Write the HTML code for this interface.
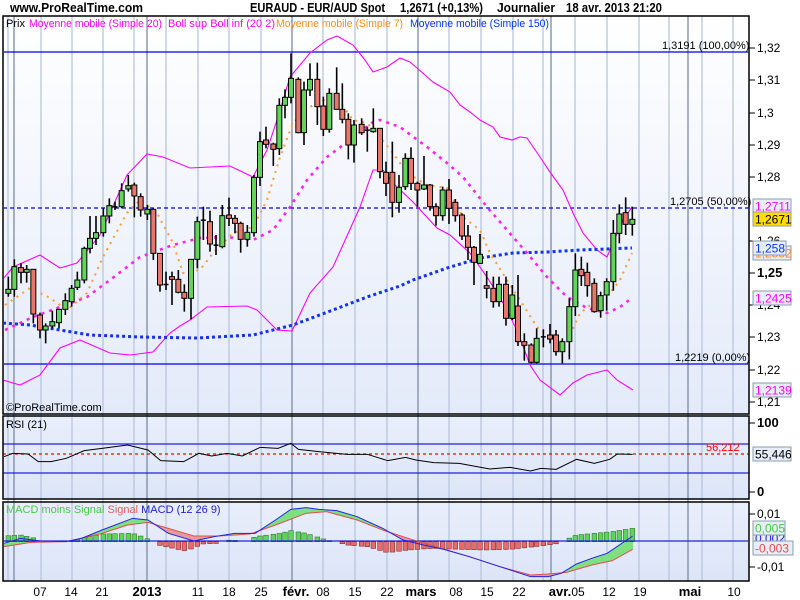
<!DOCTYPE html>
<html><head><meta charset="utf-8"><style>
html,body{margin:0;padding:0;background:#fff;width:800px;height:600px;overflow:hidden}
svg{display:block;font-family:"Liberation Sans",sans-serif}
</style></head><body>
<svg id="s" width="800" height="600" viewBox="0 0 800 600" xmlns="http://www.w3.org/2000/svg">
<defs>
<linearGradient id="gm" x1="0" y1="0" x2="0" y2="1"><stop offset="0" stop-color="#ffffff"/><stop offset="1" stop-color="#e3eaf9"/></linearGradient>
<linearGradient id="gr" x1="0" y1="0" x2="0" y2="1"><stop offset="0" stop-color="#e9eefb"/><stop offset="1" stop-color="#dce5f8"/></linearGradient>
<clipPath id="cm"><rect x="4" y="17" width="744" height="396"/></clipPath>
<clipPath id="cmacd"><rect x="4" y="503" width="744" height="77"/></clipPath>
</defs>
<rect x="3" y="16" width="746" height="398" fill="url(#gm)"/>
<rect x="3" y="416" width="746" height="83" fill="url(#gr)"/>
<rect x="3" y="502" width="746" height="79" fill="url(#gr)"/>
<g id="grid"></g>
<g id="main" clip-path="url(#cm)"></g>
<g id="rsi"></g>
<g id="macd" clip-path="url(#cmacd)"></g>
<rect x="3" y="16" width="746" height="398" fill="none" stroke="#000" stroke-width="1.5"/>
<rect x="3" y="416" width="746" height="83" fill="none" stroke="#000" stroke-width="1.5"/>
<rect x="3" y="502" width="746" height="79" fill="none" stroke="#000" stroke-width="1.5"/>
<g id="ticks"></g>

<text x="10" y="12" font-size="13" font-weight="bold" textLength="133" lengthAdjust="spacingAndGlyphs">www.ProRealTime.com</text>
<text x="250" y="12" font-size="13" font-weight="bold" textLength="135" lengthAdjust="spacingAndGlyphs">EURAUD - EUR/AUD Spot</text>
<text x="400" y="12" font-size="13" font-weight="bold" textLength="83" lengthAdjust="spacingAndGlyphs">1,2671 (+0,13%)</text>
<text x="497" y="12" font-size="13" font-weight="bold" textLength="58" lengthAdjust="spacingAndGlyphs">Journalier</text>
<text x="566" y="12" font-size="13" font-weight="bold" textLength="96" lengthAdjust="spacingAndGlyphs">18 avr. 2013 21:20</text>

<g font-size="11">
<text x="6" y="27" fill="#000">Prix</text>
<text x="29" y="27" fill="#ff00ff" textLength="133" lengthAdjust="spacingAndGlyphs">Moyenne mobile (Simple 20)</text>
<text x="168" y="27" fill="#ff00ff" textLength="107" lengthAdjust="spacingAndGlyphs">Boll sup Boll inf (20 2)</text>
<text x="276" y="27" fill="#ff8c1a" textLength="127" lengthAdjust="spacingAndGlyphs">Moyenne mobile (Simple 7)</text>
<text x="410" y="27" fill="#0033ff" textLength="139" lengthAdjust="spacingAndGlyphs">Moyenne mobile (Simple 150)</text>
<text x="662" y="49" fill="#000">1,3191 (100,00%)</text>
<text x="670" y="205" fill="#000">1,2705 (50,00%)</text>
<text x="675" y="361" fill="#000">1,2219 (0,00%)</text>
<text x="6" y="411" fill="#000">©ProRealTime.com</text>
<text x="6" y="428" fill="#000">RSI (21)</text>
<text x="706" y="451" fill="#ff0000">56,212</text>
<text x="6" y="513"><tspan fill="#44cc44">MACD moins Signal </tspan><tspan fill="#e06060">Signal </tspan><tspan fill="#2222dd">MACD (12 26 9)</tspan></text>
</g>
<g id="axis" font-size="12"></g>
<g id="dates" font-size="12"></g>
</svg>
<script>
var NS="http://www.w3.org/2000/svg";
function el(p,t,a,txt){var e=document.createElementNS(NS,t);for(var k in a)e.setAttribute(k,a[k]);if(txt!=null)e.textContent=txt;document.getElementById(p).appendChild(e);return e;}
var wk=[8,41,72,103,134,166,198,229,261,323,355,387,449,481,513,543,575,607,639,669,702,733];
var mo=[14,147,292,418,551,688];
wk.forEach(function(x){el("grid","line",{x1:x,x2:x,y1:16,y2:581,stroke:"#b9c5de","stroke-width":1.3});});
mo.forEach(function(x){el("grid","line",{x1:x,x2:x,y1:16,y2:581,stroke:"#7c8aa5","stroke-width":1.3});});
el("main","line",{x1:3,x2:749,y1:52,y2:52,stroke:"#0000ee","stroke-width":1.3});
el("main","line",{x1:3,x2:749,y1:364,y2:364,stroke:"#0000ee","stroke-width":1.3});
el("main","line",{x1:3,x2:749,y1:208,y2:208,stroke:"#0000ee","stroke-width":1.3,"stroke-dasharray":"4,3"});
function pl(g,pts,st,w,da){el(g,"polyline",{points:pts.map(function(p){return p[0]+","+p[1]}).join(" "),fill:"none",stroke:st,"stroke-width":w,"stroke-dasharray":da||"none"});}
var ub=[[3,279],[13,267],[40,255],[60,268],[77,263],[100,235],[127,175],[147,154],[163,157],[190,168],[230,166],[253,177],[267,150],[277,120],[290,77],[310,53],[327,40],[337,36],[353,45],[365,60],[373,72],[387,67],[400,58],[410,62],[417,68],[433,82],[450,92],[460,105],[470,112],[480,120],[493,127],[500,137],[512,140],[520,137],[527,138],[540,157],[550,172],[563,190],[573,213],[583,233],[597,250],[607,257],[613,243],[623,220],[632,207]];
var lb=[[3,380],[20,385],[40,375],[60,348],[80,340],[110,353],[130,355],[153,352],[170,333],[180,326],[190,320],[207,307],[247,306],[257,310],[277,330],[292,331],[310,293],[333,267],[360,207],[373,170],[383,170],[393,183],[413,202],[437,228],[450,235],[470,253],[487,277],[503,303],[517,330],[530,365],[540,380],[560,395],[573,383],[587,375],[607,370],[617,380],[633,390]];
var m20=[[5,330],[33,317],[60,307],[87,297],[110,280],[140,257],[173,245],[200,238],[227,237],[253,240],[273,230],[290,207],[307,180],[327,157],[350,140],[373,122],[380,120],[400,127],[427,147],[447,163],[463,177],[487,207],[507,230],[527,253],[547,277],[567,297],[587,308],[607,313],[620,307],[632,298]];
var m7=[[5,305],[30,288],[50,298],[67,310],[87,293],[103,257],[127,213],[140,200],[157,213],[173,243],[183,273],[200,270],[213,253],[233,233],[253,227],[267,200],[280,157],[293,123],[310,107],[323,100],[340,102],[353,120],[367,123],[380,137],[393,153],[407,173],[427,185],[447,188],[463,217],[480,230],[490,253],[507,280],[520,300],[537,327],[553,340],[567,342],[580,313],[593,303],[610,293],[620,280],[632,253]];
var m150=[[3,323],[30,325],[60,330],[90,335],[140,337],[197,338],[253,335],[293,325],[333,310],[367,297],[400,286],[413,280],[447,268],[480,258],[513,253],[547,252],[580,250],[632,248]];
pl("main",ub,"#ff00ff",1.1);pl("main",lb,"#ff00ff",1.1);
pl("main",m150,"#1133ee",3,"3,3");
pl("main",m20,"#ff22ee",2.6,"3,5");
pl("main",m7,"#ff9933",2,"2,5");
var c4=[[25,748,760,710,770,"g"],[43,680,748,658,770,"g"],[63,683,697,670,730,"r"],[80,688,697,675,728,"g"],[100,688,822,688,850,"r"],[120,825,870,818,895,"r"],[137,858,870,850,910,"g"],[157,845,858,812,865,"g"],[177,808,848,808,865,"g"],[196,782,808,760,825,"g"],[215,745,785,735,800,"g"],[232,720,742,695,750,"g"],[253,625,720,620,730,"g"],[270,595,625,528,640,"g"],[288,578,595,528,615,"g"],[310,528,578,505,590,"g"],[328,497,528,475,550,"g"],[345,499,502,485,510,"d"],[365,452,500,430,505,"g"],[385,437,447,405,455,"g"],[403,435,468,428,532,"r"],[422,470,510,460,530,"r"],[442,508,522,495,540,"g"],[460,508,640,505,660,"r"],[480,640,735,640,755,"r"],[498,732,735,695,750,"d"],[516,710,718,695,795,"r"],[535,718,757,690,760,"r"],[553,757,775,733,815,"r"],[573,658,775,658,838,"g"],[592,545,658,530,685,"g"],[610,539,542,500,600,"d"],[630,545,612,512,635,"r"],[648,614,617,585,645,"d"],[667,527,620,495,625,"g"],[687,525,535,473,558,"r"],[705,535,550,525,580,"r"],[722,550,598,545,638,"r"],[742,577,598,555,620,"g"],[762,412,578,405,590,"g"],[780,305,412,275,438,"g"],[798,300,313,260,325,"r"],[820,312,328,308,378,"r"],[838,196,326,175,345,"g"],[855,172,196,148,235,"g"],[873,115,172,40,190,"g"],[895,118,278,112,280,"r"],[912,150,278,125,315,"g"],[930,118,150,70,168,"g"],[952,118,200,68,255,"r"],[970,198,268,170,288,"r"],[988,160,268,145,278,"g"],[1010,160,208,82,205,"r"],[1027,208,238,130,250,"r"],[1045,238,315,220,358,"r"],[1062,255,315,240,368,"g"],[1085,253,278,235,285,"r"],[1102,269,272,260,335,"d"],[1120,265,275,205,278,"g"],[1140,265,395,265,415,"r"]];
var c5=[[18,397,430,365,468,"r"],[37,397,487,305,532,"r"],[57,442,487,405,518,"g"],[76,355,440,340,450,"g"],[93,355,430,322,450,"r"],[112,430,450,425,500,"r"],[132,435,447,348,450,"g"],[150,435,500,432,512,"r"],[168,500,527,490,557,"r"],[188,450,527,440,542,"g"],[207,450,505,417,552,"r"],[226,487,527,477,545,"r"],[246,525,588,520,600,"r"],[264,588,622,555,660,"r"],[282,622,667,618,735,"r"],[300,643,670,582,672,"g"],[320,737,745,693,775,"r"],[340,745,785,710,803,"r"],[357,733,785,710,800,"g"],[378,733,835,710,857,"r"],[397,765,835,735,840,"g"],[414,798,905,705,918,"r"],[433,905,916,880,962,"r"],[454,915,967,910,970,"r"],[470,895,967,865,970,"g"],[490,889,892,868,922,"d"],[510,885,897,852,910,"r"],[528,885,935,870,947,"r"],[547,905,935,895,970,"g"],[568,800,905,775,958,"g"],[586,690,800,640,828,"g"],[604,688,707,650,738,"r"],[622,697,737,668,770,"r"],[643,730,815,715,818,"r"],[662,767,812,755,833,"g"],[680,725,765,715,812,"g"],[700,580,725,540,752,"g"],[718,522,580,493,610,"g"],[737,518,553,472,585,"r"],[757,538,553,500,587,"g"]];
var cs=[];c4.forEach(function(c){cs.push([c[0]/3].concat(c.slice(1)))});c5.forEach(function(c){cs.push([380+c[0]/3].concat(c.slice(1)))});
cs.forEach(function(c){var x=c[0],y=function(v){return 40+v/3};
el("main","line",{x1:x,x2:x,y1:y(c[3]),y2:y(c[4]),stroke:"#000","stroke-width":1.6});
var bt=y(c[1]),bb=y(c[2]);if(c[5]=="d"){el("main","line",{x1:x-2.5,x2:x+2.5,y1:(bt+bb)/2,y2:(bt+bb)/2,stroke:"#000","stroke-width":1.5});}
else el("main","rect",{x:x-2.5,y:bt,width:5,height:Math.max(bb-bt,1.5),fill:c[5]=="g"?"#62d45a":"#e8766a",stroke:"#000","stroke-width":1});});
// RSI
el("rsi","line",{x1:3,x2:749,y1:444,y2:444,stroke:"#2222dd","stroke-width":1.2});
el("rsi","line",{x1:3,x2:749,y1:473,y2:473,stroke:"#2222dd","stroke-width":1.2});
el("rsi","line",{x1:3,x2:749,y1:454,y2:454,stroke:"#ff0000","stroke-width":1.2,"stroke-dasharray":"3,3"});
var r=[[8,140],[25,130],[55,132],[75,155],[100,155],[130,145],[165,122],[200,115],[250,105],[290,120],[315,152],[360,155],[390,130],[415,138],[445,130],[475,138],[510,112],[545,115],[570,100],[585,118],[625,125],[680,133],[720,133],[760,152],[795,142],[815,150],[850,158],[900,160],[960,177],[1000,172],[1040,183],[1060,175],[1090,178],[1130,148],[1165,160],[1195,148],[1210,132],[1240,133]];
pl("rsi",r.map(function(p){return[p[0]/1.96,410+p[1]/3]}),"#000",1);
// MACD
var mb=[[8,400],[40,385],[80,393],[130,395],[160,385],[200,360],[260,325],[290,330],[330,370],[380,393],[420,380],[460,370],[500,370],[540,330],[570,298],[600,293],[625,298],[660,302],[700,320],[750,355],[790,390],[830,405],[870,418],[920,440],[980,470],[1040,500],[1075,500],[1100,490],[1130,462],[1160,445],[1190,430],[1240,378]];
var sg=[[8,410],[60,397],[130,395],[200,370],[250,345],[290,337],[330,355],[380,378],[430,378],[490,372],[540,345],[600,310],[640,305],[700,330],[750,360],[800,385],[850,408],[920,440],[980,470],[1040,495],[1075,492],[1110,487],[1160,465],[1200,452],[1240,418]];
var hs=[[8,378],[40,375],[70,385],[80,397],[130,396],[140,392],[160,385],[200,372],[260,370],[285,383],[300,396],[310,405],[360,422],[380,415],[395,402],[430,400],[440,396],[450,390],[470,392],[482,396],[500,380],[550,370],[570,362],[600,370],[640,390],[660,396],[680,405],[720,410],[760,428],[800,420],[850,415],[900,418],[950,420],[1000,418],[1060,408],[1100,399],[1115,385],[1130,375],[1200,365],[1240,355]];
function cv(a){return a.map(function(p){return[p[0]/1.96,410+p[1]/3]})}
mb=cv(mb);sg=cv(sg);hs=cv(hs);
function at(a,x){if(x<=a[0][0])return a[0][1];for(var i=1;i<a.length;i++)if(x<=a[i][0]){var t=(x-a[i-1][0])/(a[i][0]-a[i-1][0]);return a[i-1][1]+t*(a[i][1]-a[i-1][1]);}return a[a.length-1][1];}
for(var x=4;x<633;x+=1){var m1=at(mb,x),s1=at(sg,x),m2=at(mb,x+1),s2=at(sg,x+1);
el("macd","polygon",{points:x+","+m1+" "+(x+1.05)+","+m2+" "+(x+1.05)+","+s2+" "+x+","+s1,fill:(m1<s1)?"#7fe07f":"#e89a9a"});}
cs.forEach(function(c){var x=c[0];var y0=541.7;var d=y0-at(hs,x);if(Math.abs(d)<1)return;
if(d>0)el("macd","rect",{x:x-2.3,y:y0-d,width:4.6,height:d,fill:"#5fd45a",stroke:"#2a7a2a","stroke-width":0.6});
else el("macd","rect",{x:x-2.3,y:y0,width:4.6,height:-d,fill:"#e86a6a",stroke:"#8a2a2a","stroke-width":0.6});});
el("macd","line",{x1:3,x2:749,y1:541,y2:541,stroke:"#2222dd","stroke-width":1.2});
pl("macd",sg.filter(function(p){return p[0]<=633}),"#e05050",1);
pl("macd",mb.filter(function(p){return p[0]<=633}),"#2222ee",1);
var ax=[[48,"1,32"],[80,"1,31"],[113,"1,3"],[145,"1,29"],[177,"1,28"],[241,"1,26"],[273,"1,25",1],[305,"1,24"],[337,"1,23"],[370,"1,22"],[402,"1,21"],[423,"100",1],[492,"0",1],[514,"0,01"],[567,"-0,01"]];
ax.forEach(function(a){el("ticks","line",{x1:749,x2:755,y1:a[0],y2:a[0],stroke:"#000","stroke-width":1});
el("axis","text",{x:757,y:a[0]+4,"font-weight":a[2]?"bold":"normal","font-size":a[2]?13:12},a[1]);});
function box(y,txt,col,bg,w){el("axis","rect",{x:753,y:y-7,width:w||38,height:14,fill:bg||"#e8eef9",stroke:"#8d9cb0","stroke-width":1});el("axis","text",{x:755,y:y+4.5,fill:col},txt);}
box(253,"1,2552","#ff8c1a");box(248,"1,258","#0033ff","#e8eef9",33);
box(206,"1,2711","#ff00ff");box(219,"1,2671","#000","#ffdd00");
box(298,"1,2425","#ff00ff");box(390,"1,2139","#ff00ff");
box(454,"55,446","#000");
box(538,"0,002","#2222dd",null,32);box(528,"0,005","#44cc44",null,32);box(548,"-0,003","#e05050",null,40);
var dt=[[40,"07"],[71,"14"],[102,"21"],[147,"2013",1],[198,"11"],[229,"18"],[261,"25"],[296,"févr.",1],[323,"08"],[355,"15"],[387,"22"],[421,"mars",1],[456,"08"],[487,"15"],[519,"22"],[560,"avr.",1],[578,"05"],[609,"12"],[640,"19"],[690,"mai",1],[734,"10"]];
dt.forEach(function(d){el("dates","text",{x:d[0],y:596,"text-anchor":"middle","font-weight":d[2]?"bold":"normal","font-size":d[2]?13:12},d[1]);});
</script>
</body></html>
